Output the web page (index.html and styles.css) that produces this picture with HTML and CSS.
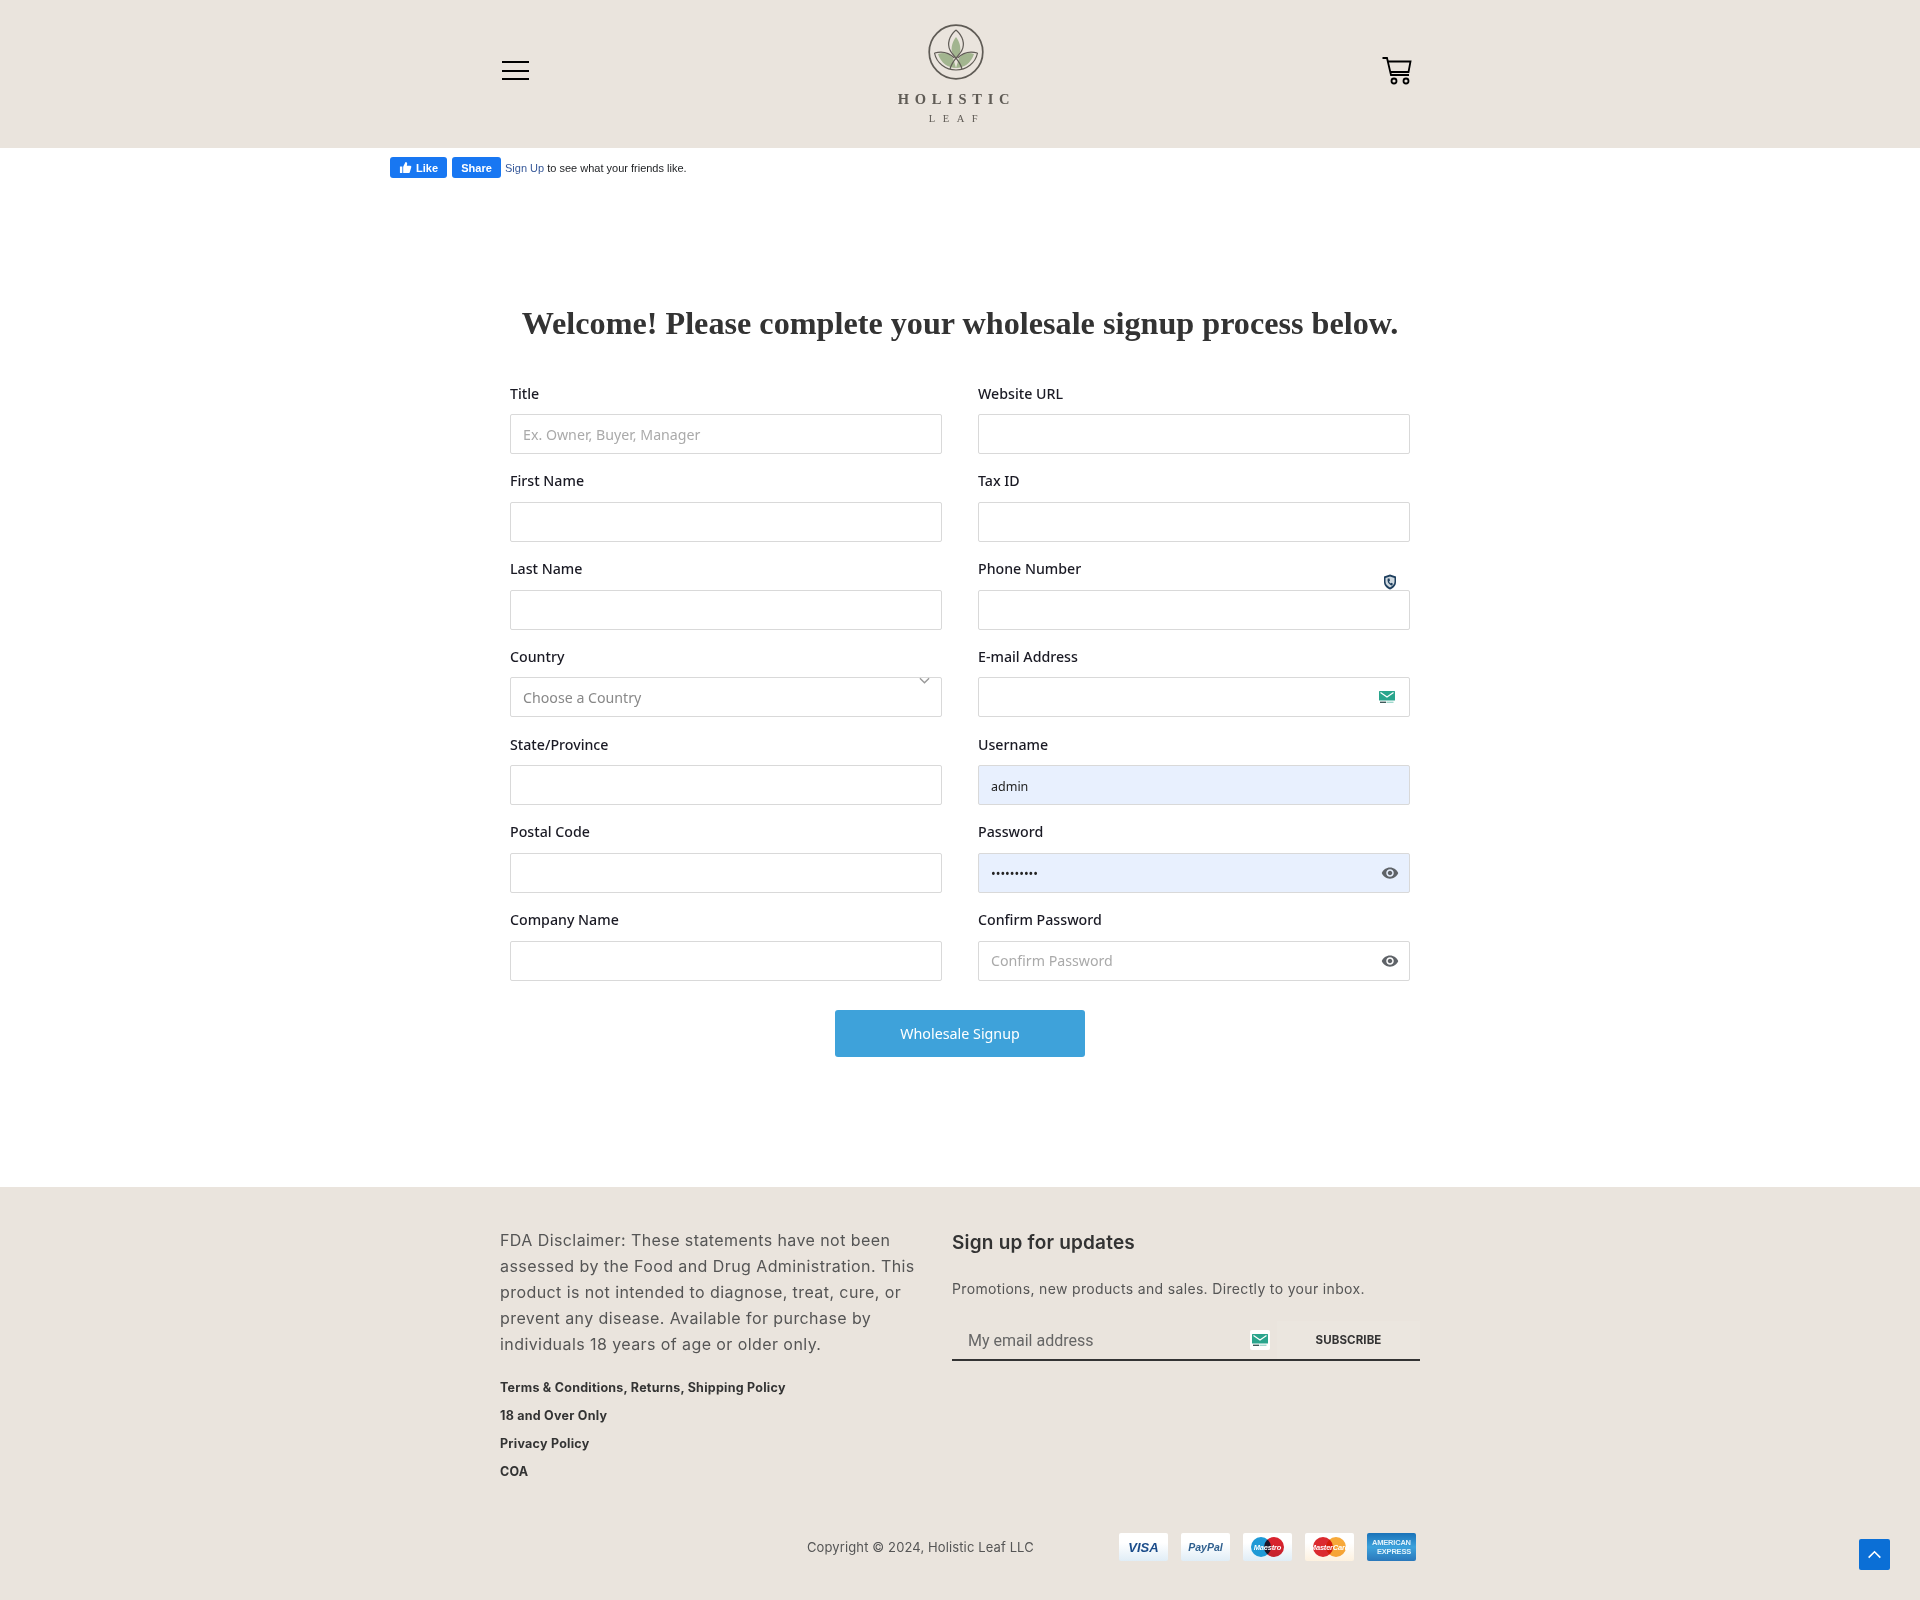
FILE: index.html
```html
<!DOCTYPE html>
<html lang="en">
<head>
<meta charset="utf-8">
<title>Wholesale Signup - Holistic Leaf</title>
<link rel="stylesheet" href="styles.css">
</head>
<body>
<svg class="defs" width="0" height="0" aria-hidden="true">
  <symbol id="eye" viewBox="0 0 24 24"><path fill="currentColor" d="M12 4.5C7 4.5 2.73 7.61 1 12c1.73 4.39 6 7.5 11 7.5s9.27-3.11 11-7.5c-1.73-4.39-6-7.5-11-7.5zM12 17c-2.76 0-5-2.24-5-5s2.24-5 5-5 5 2.24 5 5-2.24 5-5 5zm0-8c-1.66 0-3 1.34-3 3s1.34 3 3 3 3-1.34 3-3-1.34-3-3-3z"/></symbol>
  <symbol id="mail" viewBox="0 0 16 13"><rect y="0" width="16" height="9.5" rx=".5" fill="#2aa58d"/><path d="M1.5 1.5 8 6l6.500-4.500" fill="none" stroke="#fff" stroke-width="1.2"/><rect x="1" y="10.600" width="6" height="1.400" fill="#3d5a5a"/><rect x="7.500" y="10.600" width="7" height="1.400" fill="#9fd8cc"/></symbol>
</svg>

<header class="site-header">
  <button class="burger" aria-label="Menu"><span></span><span></span><span></span></button>
  <a class="logo" href="#">
    <svg class="logo-mark" viewBox="0 0 56 56" width="56" height="56">
      <circle cx="28" cy="28" r="26.800" fill="none" stroke="#5f5b55" stroke-width="1.700"/>
      <path d="M28 13c-4 5-5 11-4 15 1 3 3 4 4 6 1-2 3-3 4-6 1-4 0-10-4-15z" fill="#a2b58f"/>
      <path d="M10 30c6-2 11-1 15 4l3 10c-8 0-15-5-18-14z" fill="#a2b58f"/>
      <path d="M46 30c-6-2-11-1-15 4l-3 10c8 0 15-5 18-14z" fill="#a2b58f"/>
      <g fill="none" stroke="#5f5b55" stroke-width="1.200">
        <path d="M28 6c-7 6-9 14-6 20 2 5 10 10 12 19"/>
        <path d="M28 6c7 6 9 14 6 20-2 5-10 10-12 19"/>
        <path d="M6.500 29c7-2 14-1 20 5M49.500 29c-7-2-14-1-20 5"/>
        <path d="M6.500 29c2 10 11 17 21.500 17s19.500-7 21.500-17"/>
      </g>
    </svg>
    <span class="logo-name">HOLISTIC</span>
    <span class="logo-sub">LEAF</span>
  </a>
  <a class="cart" href="#" aria-label="Cart">
    <svg viewBox="0 0 30 28" width="30" height="28" fill="none" stroke="#000" stroke-width="1.800">
      <path d="M0.500 1H5L9 18H27"/>
      <path d="M6 4.500H28.500L26.500 15H8.300"/>
      <circle cx="12" cy="24" r="2.500"/>
      <circle cx="24" cy="24" r="2.500"/>
    </svg>
  </a>
</header>

<div class="social">
  <a class="fb-btn fb-like" href="#">
    <svg viewBox="0 0 14 14" width="13" height="13"><path fill="#fff" d="M1 6h2.600v7H1zM4.500 6.200 7 1c1.300 0 2 .9 1.800 2.100L8.400 5.200h3.700c.9 0 1.400.8 1.100 1.600l-1.600 5.300c-.2.600-.7.900-1.300.9H4.500z"/></svg>
    Like
  </a>
  <a class="fb-btn fb-share" href="#">Share</a>
  <span class="fb-text"><a href="#">Sign Up</a> to see what your friends like.</span>
</div>

<main class="signup">
  <h1>Welcome! Please complete your wholesale signup process below.</h1>
  <form class="signup-form">
    <div class="fields">
      <div class="field"><label>Title</label><input type="text" placeholder="Ex. Owner, Buyer, Manager"></div>
      <div class="field"><label>Website URL</label><input type="text"></div>

      <div class="field"><label>First Name</label><input type="text"></div>
      <div class="field"><label>Tax ID</label><input type="text"></div>

      <div class="field"><label>Last Name</label><input type="text"></div>
      <div class="field">
        <label>Phone Number</label>
        <div class="control">
          <input type="text">
          <svg class="ico-shield" viewBox="0 0 14 16" width="14" height="16">
            <path d="M7 .5 13 2.500V8c0 3.500-2.500 6-6 7.500C3.500 14 1 11.500 1 8V2.500z" fill="#1e3f5e"/>
            <path d="M7 2.500 11.500 4v4c0 2.300-1.900 4-4.500 5.400C4.400 12 2.500 10.300 2.500 8V4z" fill="#cfd9e0"/>
            <path d="M4.800 4.500c-1 3 1.200 6.500 4.200 7l1-1.700-1.800-1-.7.700c-.8-.5-1.300-1.300-1.400-2.200l.9-.5-.5-2.200z" fill="#1e3f5e"/>
          </svg>
        </div>
      </div>

      <div class="field">
        <label>Country</label>
        <div class="control">
          <select class="select"><option>Choose a Country</option></select>
          <svg class="ico-chevron" viewBox="0 0 12 7" width="11" height="7"><path d="M1 1l5 5 5-5" fill="none" stroke="#999" stroke-width="1.500"/></svg>
        </div>
      </div>
      <div class="field">
        <label>E-mail Address</label>
        <div class="control">
          <input type="text">
          <svg class="ico-mail"><use href="#mail"/></svg>
        </div>
      </div>

      <div class="field"><label>State/Province</label><input type="text"></div>
      <div class="field"><label>Username</label><input class="filled" type="text" value="admin"></div>

      <div class="field"><label>Postal Code</label><input type="text"></div>
      <div class="field">
        <label>Password</label>
        <div class="control">
          <input class="filled" type="password" value="password12">
          <svg class="ico-eye"><use href="#eye"/></svg>
        </div>
      </div>

      <div class="field"><label>Company Name</label><input type="text"></div>
      <div class="field">
        <label>Confirm Password</label>
        <div class="control">
          <input type="text" placeholder="Confirm Password">
          <svg class="ico-eye"><use href="#eye"/></svg>
        </div>
      </div>
    </div>
    <button class="submit" type="button">Wholesale Signup</button>
  </form>
</main>

<footer class="site-footer">
  <div class="footer-top">
    <div class="footer-about">
      <p class="disclaimer">FDA Disclaimer: These statements have not been<br>assessed by the Food and Drug Administration. This<br>product is not intended to diagnose, treat, cure, or<br>prevent any disease. Available for purchase by<br>individuals 18 years of age or older only.</p>
      <ul class="footer-links">
        <li><a href="#">Terms &amp; Conditions, Returns, Shipping Policy</a></li>
        <li><a href="#">18 and Over Only</a></li>
        <li><a href="#">Privacy Policy</a></li>
        <li><a href="#">COA</a></li>
      </ul>
    </div>
    <div class="footer-news">
      <h2>Sign up for updates</h2>
      <p>Promotions, new products and sales. Directly to your inbox.</p>
      <form class="news-form">
        <input type="text" placeholder="My email address">
        <span class="news-icon"><svg width="16" height="13"><use href="#mail"/></svg></span>
        <button type="button">SUBSCRIBE</button>
      </form>
    </div>
  </div>
  <div class="footer-bottom">
    <span class="copyright">Copyright © 2024, Holistic Leaf LLC</span>
    <div class="cards">
      <span class="card card-visa">VISA</span>
      <span class="card card-paypal">PayPal</span>
      <span class="card card-maestro"><i class="dot dot-a"></i><i class="dot dot-b"></i><b>Maestro</b></span>
      <span class="card card-master"><i class="dot dot-a"></i><i class="dot dot-b"></i><b>MasterCard</b></span>
      <span class="card card-amex"><span class="amex-a">AMERICAN</span><span class="amex-b">EXPRESS</span></span>
    </div>
  </div>
  <a class="to-top" href="#" aria-label="Back to top">
    <svg viewBox="0 0 16 10" width="15" height="9"><path d="M1.500 8.500 8 2l6.500 6.500" fill="none" stroke="#fff" stroke-width="1.800"/></svg>
  </a>
</footer>
</body>
</html>
```
FILE: styles.css
```css
* { box-sizing: border-box; }
html, body { margin: 0; padding: 0; }
body { background: #fff; font-family: "Noto Sans", "Open Sans", sans-serif; color: #222; }
a { color: inherit; text-decoration: none; }
.defs { position: absolute; }

.site-header {
  height: 148px;
  background: #eae4dd;
  display: flex;
  justify-content: space-between;
  align-items: flex-start;
  padding: 0 508px 0 502px;
}
.burger {
  width: 27px;
  margin-top: 61px;
  padding: 0;
  border: 0;
  background: none;
  display: flex;
  flex-direction: column;
  gap: 6.500px;
}
.burger span { display: block; height: 2px; background: #000; }
.logo {
  display: flex;
  flex-direction: column;
  align-items: center;
  padding-top: 24px;
  color: #5f5b55;
  font-family: "Liberation Serif", serif;
}
.logo-mark { display: block; margin-left: 2px; }
.logo-name { margin-top: 10px; font-size: 14.500px; line-height: 18px; letter-spacing: 5.700px; margin-right: -2px; font-weight: 700; }
.logo-sub { margin-top: 4px; font-size: 10.500px; line-height: 14px; letter-spacing: 7.500px; margin-right: -3px; }
.cart { margin-top: 57px; display: block; height: 28px; }
.cart svg { display: block; }

.social {
  margin-top: 9px;
  padding-left: 390px;
  height: 21px;
  display: flex;
  align-items: center;
  font-family: "Liberation Sans", Arial, sans-serif;
}
.fb-btn {
  height: 21px;
  border-radius: 3px;
  background: #1877f2;
  color: #fff;
  font-size: 11px;
  font-weight: 700;
  display: flex;
  align-items: center;
  justify-content: center;
  gap: 4px;
}
.fb-like { width: 57px; }
.fb-share { width: 49px; margin-left: 5px; padding-top: 1px; }
.fb-text { margin-left: 4px; font-size: 11px; color: #1c1e21; white-space: nowrap; }
.fb-text a { color: #365899; }

.signup h1 {
  margin: 0;
  padding-top: 122.500px;
  font-family: "Liberation Serif", serif;
  font-size: 32.200px;
  line-height: 44px;
  font-weight: 700;
  text-align: center;
  color: #333;
}
.signup-form {
  margin: 37px 0 0 510px;
  width: 900px;
  display: flex;
  flex-direction: column;
  align-items: center;
  padding-bottom: 130px;
}
.fields {
  width: 100%;
  display: grid;
  grid-template-columns: 432px 432px;
  column-gap: 36px;
  row-gap: 15.250px;
}
.field label {
  display: block;
  height: 22.500px;
  margin-bottom: 10px;
  font-size: 14.200px;
  line-height: 24.500px;
  font-weight: 500;
  color: #1a1a24;
}
.field input, .field select {
  display: block;
  width: 100%;
  height: 40px;
  padding: 0 12px;
  border: 1px solid #d9d9d9;
  border-radius: 2px;
  background: #fff;
  font-family: "Noto Sans", sans-serif;
  font-size: 14.200px;
  color: #222;
  outline: none;
}
.field input::placeholder { color: #aaa; opacity: 1; }
.field .select { appearance: none; color: #888; }
.field input.filled { background: #e8f0fe; font-size: 12.500px; padding-top: 2px; }
.control { position: relative; }
.ico-eye { position: absolute; right: 11px; top: 11px; width: 18px; height: 18px; color: #5f6368; }
.ico-mail { position: absolute; right: 15px; top: 14px; width: 16px; height: 13px; }
.ico-shield { position: absolute; right: 13px; top: -16px; }
.ico-chevron { position: absolute; right: 12px; top: 0; }
.submit {
  margin-top: 29.500px;
  width: 250px;
  height: 47px;
  border: 0;
  border-radius: 3px;
  background: #3ea2da;
  color: #fff;
  font-family: "Noto Sans", sans-serif;
  font-size: 14.300px;
}

.site-footer {
  position: relative;
  height: 413px;
  background: #eae4dd;
  padding: 40px 0 0 500px;
  font-family: Inter, "Noto Sans", sans-serif;
  color: #555;
}
.footer-top { display: flex; }
.footer-about { width: 452px; }
.disclaimer { margin: 0; font-size: 16px; line-height: 26px; letter-spacing: .42px; white-space: nowrap; }
.footer-links { list-style: none; margin: 17px 0 0; padding: 0; font-size: 12.500px; line-height: 28px; letter-spacing: .25px; font-weight: 700; color: #333; }
.footer-news { width: 468px; padding-top: 4px; }
.footer-news h2 { margin: 0; font-size: 19px; line-height: 24px; letter-spacing: .2px; font-weight: 600; color: #333; }
.footer-news p { margin: 24px 0 0; font-size: 14px; line-height: 20px; letter-spacing: .34px; }
.news-form {
  position: relative;
  margin-top: 22px;
  height: 40px;
  display: flex;
  border-bottom: 2px solid #333;
}
.news-form input {
  flex: 1;
  min-width: 0;
  padding: 0 16px;
  border: 0;
  background: transparent;
  font-family: Roboto, sans-serif;
  font-size: 16px;
  color: #666;
  outline: none;
}
.news-form input::placeholder { color: #666; opacity: 1; }
.news-icon {
  position: absolute;
  left: 298px;
  top: 9px;
  width: 20px;
  height: 20px;
  border-radius: 2px;
  background: #fff;
  display: flex;
  align-items: center;
  justify-content: center;
}
.news-form button {
  width: 143px;
  border: 0;
  background: #ebe6df;
  font-family: Inter, sans-serif;
  font-size: 11.500px;
  letter-spacing: .1px;
  font-weight: 700;
  color: #333;
}
.footer-bottom { margin-top: 47px; padding-left: 307px; display: flex; align-items: center; }
.copyright { width: 312px; font-size: 13px; letter-spacing: .12px; color: #555; white-space: nowrap; }
.cards { display: flex; gap: 13px; }
.card {
  position: relative;
  width: 49px;
  height: 28px;
  border-radius: 2px;
  background: linear-gradient(#fff 35%, #e0edf6);
  display: flex;
  align-items: center;
  justify-content: center;
  font-family: "Liberation Sans", sans-serif;
  font-style: italic;
  font-weight: 700;
  overflow: hidden;
}
.card-visa { font-size: 13px; color: #1b4c8a; }
.card-paypal { font-size: 10.500px; color: #2f5f8e; }
.card-master { background: linear-gradient(#fff 35%, #fdf1df); }
.dot { position: absolute; top: 4px; width: 20px; height: 20px; border-radius: 50%; }
.dot-a { left: 8px; }
.dot-b { right: 8px; }
.card-maestro .dot-a { background: #1f9ad6; }
.card-maestro .dot-b { background: #d8232e; mix-blend-mode: multiply; }
.card-master .dot-a { background: #db2a2f; }
.card-master .dot-b { background: #f7a93a; mix-blend-mode: multiply; }
.card b { position: relative; font-size: 7.500px; letter-spacing: -.2px; color: #fff; white-space: nowrap; }
.card-amex {
  flex-direction: column;
  align-items: stretch;
  padding: 0 5px;
  background: linear-gradient(#1a72b8, #3da2dc 50%, #2a78bb);
  color: #dff1fb;
  font-size: 7.500px;
  line-height: 9px;
  font-style: normal;
  letter-spacing: -.2px;
}
.amex-a { text-align: left; }
.amex-b { text-align: right; }
.to-top {
  position: absolute;
  left: 1859px;
  top: 352px;
  width: 31px;
  height: 31px;
  border-radius: 2px;
  background: #0b6fd6;
  display: flex;
  align-items: center;
  justify-content: center;
}
```
